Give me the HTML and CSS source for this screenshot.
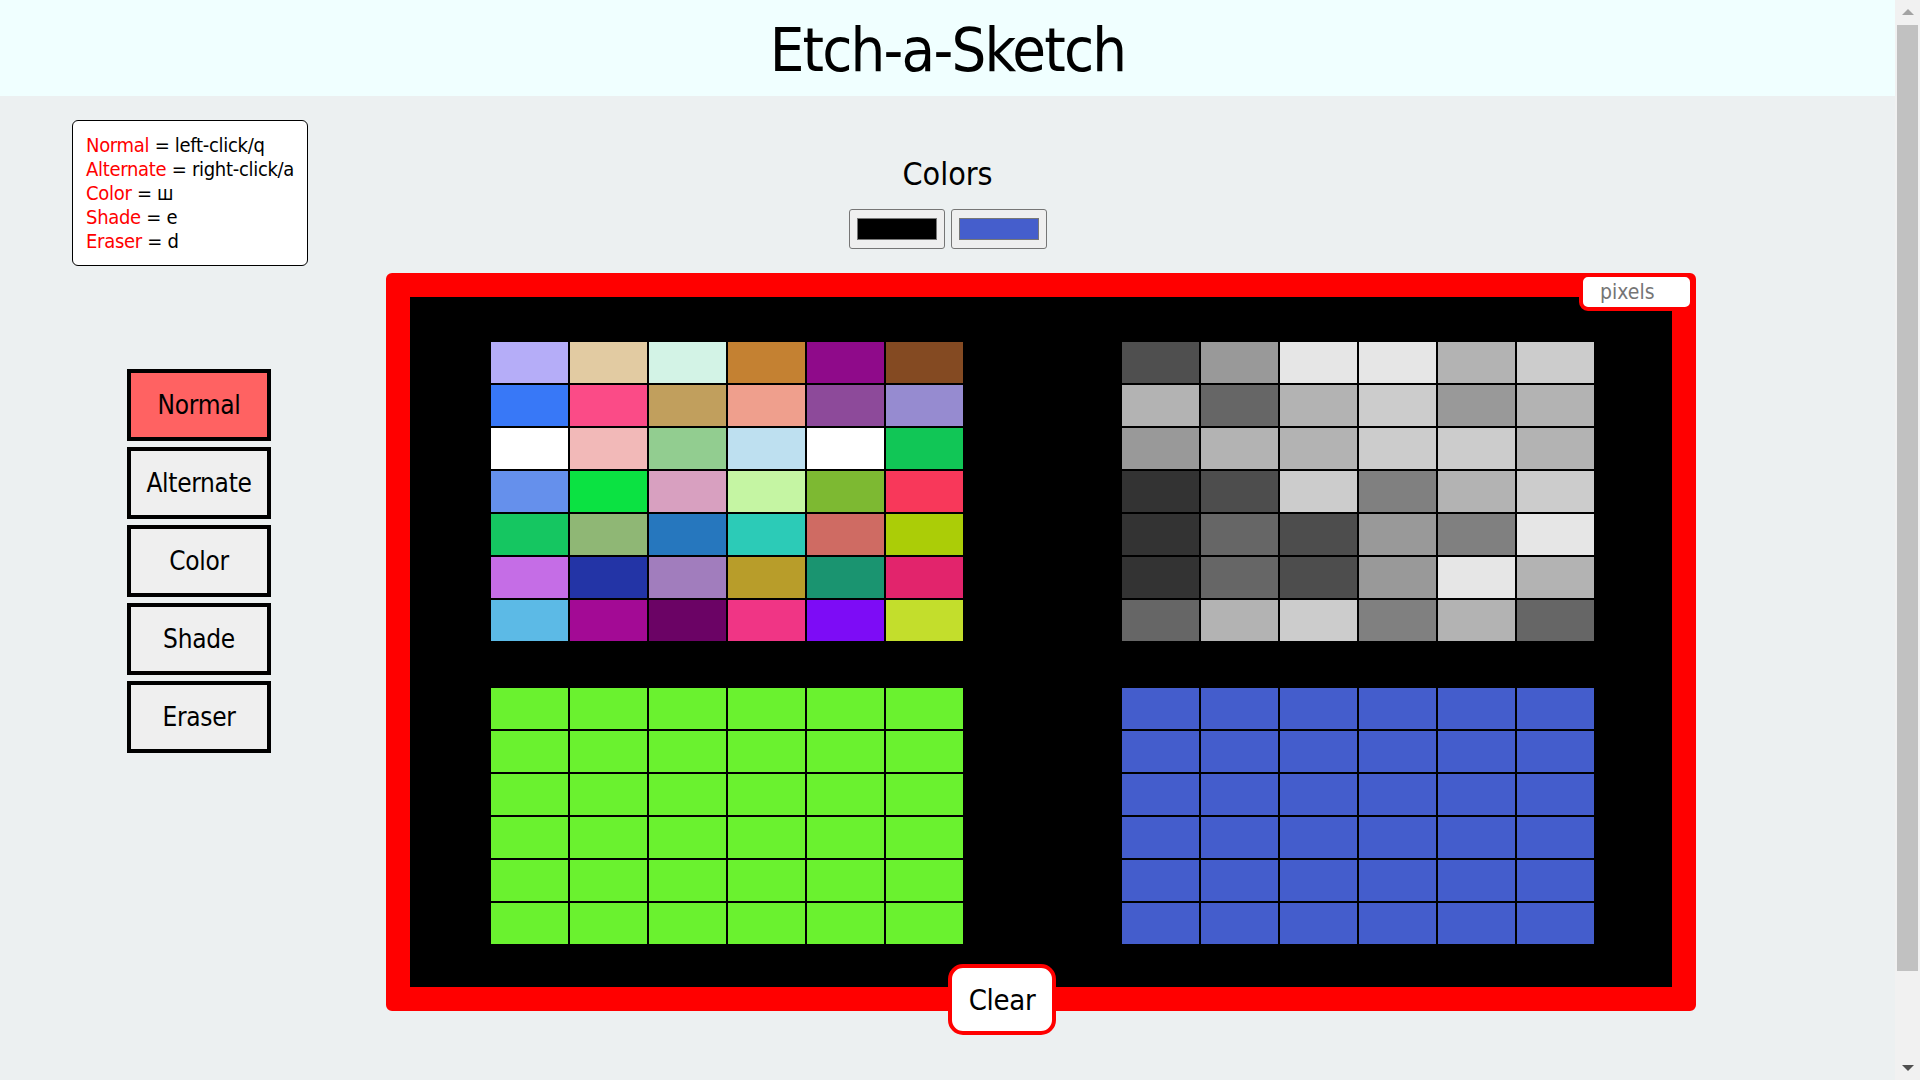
FILE: index.html
```html
<!DOCTYPE html>
<html lang="en">
<head>
<meta charset="utf-8">
<title>Etch-a-Sketch</title>
<link rel="stylesheet" href="styles.css">
</head>
<body>
<div class="page">
  <header class="header"><h1 class="title">Etch-a-Sketch</h1></header>
  <main class="main">
    <div class="legend">
      <div><span class="key">Normal</span> = left-click/q</div>
      <div><span class="key">Alternate</span> = right-click/a</div>
      <div><span class="key">Color</span> = ш</div>
      <div><span class="key">Shade</span> = e</div>
      <div><span class="key">Eraser</span> = d</div>
    </div>
    <section class="colors">
      <h2 class="colors-title">Colors</h2>
      <div class="color-row">
        <input class="color-input" type="color" value="#000000">
        <input class="color-input" type="color" value="#455ecc">
      </div>
    </section>
    <div class="workspace">
      <nav class="modes">
        <button class="mode active">Normal</button>
        <button class="mode">Alternate</button>
        <button class="mode">Color</button>
        <button class="mode">Shade</button>
        <button class="mode">Eraser</button>
      </nav>
      <div class="frame">
        <input class="pixels" type="text" placeholder="pixels">
        <div class="board">
          <div class="grid g7" id="g1"></div>
          <div class="grid g7" id="g2"></div>
          <div class="grid g6 green" id="g3"></div>
          <div class="grid g6 blue" id="g4"></div>
        </div>
        <button class="clear">Clear</button>
      </div>
    </div>
  </main>
</div>
<div class="scrollbar" aria-hidden="true">
  <span class="arrow up"></span>
  <span class="thumb"></span>
  <span class="arrow down"></span>
</div>
<script src="script.js"></script>
</body>
</html>
```
FILE: styles.css
```css
* { box-sizing: border-box; }
html, body { margin: 0; padding: 0; }
html { overflow: hidden; }
body {
  background: #ecf0f1;
  font-family: "DejaVu Sans Condensed", "Liberation Sans", sans-serif;
  color: #000;
}
.page {
  width: 1895px;
  min-height: 1180px;
}
.header {
  background: #f0ffff;
  height: 96px;
  display: flex;
  align-items: center;
  justify-content: center;
}
.title {
  margin: 0;
  font-weight: normal;
  font-size: 61px;
  letter-spacing: -1.8px;
  line-height: 1;
  padding-top: 3px;
}
.main { position: relative; }
.legend {
  position: absolute;
  left: 72px;
  top: 24px;
  width: 236px;
  height: 146px;
  background: #fff;
  border: 1px solid #000;
  border-radius: 6px;
  padding: 12px 0 0 13px;
  font-size: 20px;
  letter-spacing: -0.3px;
  line-height: 24px;
}
.key { color: #ff0000; }
.colors {
  display: flex;
  flex-direction: column;
  align-items: center;
  padding-top: 58px;
}
.colors-title {
  margin: 0;
  font-weight: normal;
  font-size: 32px;
  line-height: 40px;
}
.color-row {
  display: flex;
  gap: 6px;
  margin-top: 15px;
}
.color-input {
  width: 96px;
  height: 40px;
  margin: 0;
  padding: 8px 7px;
  border: 1px solid #767676;
  border-radius: 3px;
  background: #efefef;
}
.color-input::-webkit-color-swatch-wrapper { padding: 0; }
.color-input::-webkit-color-swatch { border: 1px solid #777; }
.workspace {
  display: flex;
  margin-top: 24px;
}
.modes {
  display: flex;
  flex-direction: column;
  gap: 6px;
  margin: 96px 0 0 127px;
  width: 259px;
}
.mode {
  width: 144px;
  height: 72px;
  border: 4px solid #000;
  background: #efefef;
  font-family: inherit;
  font-size: 26px;
  letter-spacing: -0.3px;
  color: #000;
  padding: 0;
}
.mode.active { background: #ff6262; }
.frame {
  position: relative;
  width: 1310px;
  border: 24px solid #ff0000;
  border-radius: 6px;
  background: #000;
}
.pixels {
  position: absolute;
  top: -24px;
  right: -22px;
  width: 115px;
  height: 38px;
  border: 4px solid #ff0000;
  border-radius: 9px;
  background: #fff;
  font-family: inherit;
  font-size: 21px;
  padding: 0 0 0 17px;
  outline: none;
}
.pixels::placeholder { color: #757575; }
.board {
  display: grid;
  grid-template-columns: 474px 474px;
  column-gap: 157px;
  row-gap: 45px;
  padding: 44px 77px 42px 80px;
}
.grid {
  display: grid;
  grid-template-columns: repeat(6, 1fr);
}
.g7 { grid-template-rows: repeat(7, 43px); }
.g6 { grid-template-rows: repeat(6, 43px); }
.cell { border: 1px solid #000; }
.green .cell { background: #6af22f; }
.blue .cell { background: #445dcc; }
.clear {
  position: absolute;
  left: 538px;
  bottom: -48px;
  width: 108px;
  height: 71px;
  border: 4px solid #ff0000;
  border-radius: 15px;
  background: #fff;
  font-family: inherit;
  font-size: 29px;
  letter-spacing: -0.3px;
  color: #000;
  padding: 0;
}
.scrollbar {
  position: fixed;
  top: 0;
  right: 0;
  width: 25px;
  height: 1080px;
  background: #f1f1f1;
}
.thumb {
  position: absolute;
  left: 2px;
  right: 2px;
  top: 25px;
  height: 946px;
  background: #c1c1c1;
}
.arrow {
  position: absolute;
  left: 7px;
  width: 0;
  height: 0;
  border-left: 6px solid transparent;
  border-right: 6px solid transparent;
}
.arrow.up { top: 9px; border-bottom: 6px solid #a3a3a3; }
.arrow.down { bottom: 9px; border-top: 6px solid #505050; }
```
FILE: script.js
```js
const c1 = [
 "#b5adf8","#e2cba2","#d3f3e6","#c48132","#8f0a8a","#844a22",
 "#3878f7","#fb4b87","#c19f5d","#ef9f8d","#8d4a9a","#968bd0",
 "#ffffff","#f2b9b8","#92cd90","#bee0f0","#ffffff","#11c656",
 "#6590ec","#0be242","#d8a0c0","#c5f5a3","#7db932","#f8385a",
 "#15c661","#8fb775","#2677be","#2ccbb7","#cf6b63","#abcd07",
 "#c56de6","#2334a6","#a17dbd","#b89d2a","#1a9470","#e2246c",
 "#5cbae6","#a30a95","#6b0365","#f03585","#7d0cf6","#c3de2c"];
const c2 = [
 "#4f4f4f","#999999","#e6e6e6","#e6e6e6","#b3b3b3","#cccccc",
 "#b3b3b3","#666666","#b3b3b3","#cccccc","#999999","#b3b3b3",
 "#999999","#b3b3b3","#b3b3b3","#cccccc","#cccccc","#b3b3b3",
 "#333333","#4d4d4d","#cccccc","#808080","#b3b3b3","#cccccc",
 "#333333","#666666","#4d4d4d","#999999","#808080","#e6e6e6",
 "#333333","#666666","#4d4d4d","#999999","#e6e6e6","#b3b3b3",
 "#666666","#b3b3b3","#cccccc","#808080","#b3b3b3","#666666"];
function fill(id, n, colors) {
  const g = document.getElementById(id);
  for (let i = 0; i < n; i++) {
    const d = document.createElement("div");
    d.className = "cell";
    if (colors) d.style.background = colors[i];
    g.appendChild(d);
  }
}
fill("g1", 42, c1);
fill("g2", 42, c2);
fill("g3", 36);
fill("g4", 36);
```
